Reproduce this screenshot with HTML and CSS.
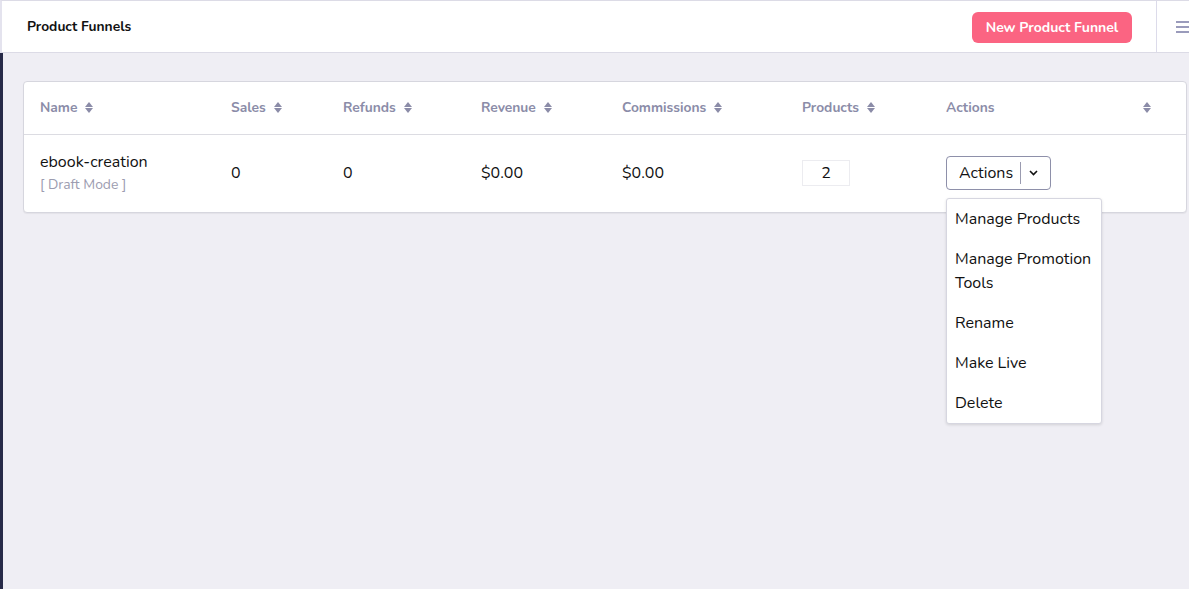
FILE: index.html
```html
<!DOCTYPE html>
<html>
<head>
<meta charset="utf-8" />
<title>Product Funnels</title>
<link rel="stylesheet" href="styles.css">
</head>
<body>
	<header class="topbar">
		<h1 class="page-title">Product Funnels</h1>
		<button class="btn-new">New Product Funnel</button>
		<span class="menu-toggle" aria-hidden="true">
			<svg width="14" height="12" viewBox="0 0 14 12"><rect x="0" y="0" width="14" height="2"/><rect x="0" y="5" width="14" height="2"/><rect x="0" y="10" width="14" height="2"/></svg>
		</span>
	</header>

	<main class="content">
		<div class="card">
			<div class="grid grid-head">
				<div class="th">Name <span class="sort"></span></div>
				<div class="th">Sales <span class="sort"></span></div>
				<div class="th">Refunds <span class="sort"></span></div>
				<div class="th">Revenue <span class="sort"></span></div>
				<div class="th">Commissions <span class="sort"></span></div>
				<div class="th">Products <span class="sort"></span></div>
				<div class="th th-actions">Actions <span class="sort"></span></div>
			</div>
			<div class="grid grid-row">
				<div class="td">
					<div class="funnel-name">ebook-creation</div>
					<div class="funnel-state">[ Draft Mode ]</div>
				</div>
				<div class="td">0</div>
				<div class="td">0</div>
				<div class="td">$0.00</div>
				<div class="td">$0.00</div>
				<div class="td"><span class="count">2</span></div>
				<div class="td">
					<div class="actions">
						<button class="btn-actions">
							<span class="btn-label">Actions</span>
							<span class="caret">
								<svg width="9" height="6" viewBox="0 0 9 6"><path d="M1 1l3.5 3.5L8 1" fill="none" stroke="#111" stroke-width="1.6"/></svg>
							</span>
						</button>
						<ul class="dropdown">
							<li>Manage Products</li>
							<li>Manage Promotion Tools</li>
							<li>Rename</li>
							<li>Make Live</li>
							<li>Delete</li>
						</ul>
					</div>
				</div>
			</div>
		</div>
	</main>
</body>
</html>
```

FILE: styles.css
```css
html, body {
	margin: 0;
	height: 100%;
}

body {
	font-family: "Nunito", "Lato", "Noto Sans", sans-serif;
	color: #111;
	background: #efeef4;
	display: flex;
	flex-direction: column;
}

/* Top bar */
.topbar {
	display: flex;
	align-items: center;
	height: 51px;
	background: #fff;
	border-top: 1px solid #dcdbe6;
	border-left: 2px solid #e4e3ee;
	border-bottom: 1px solid #dcdbe6;
	padding-left: 25px;
}
.page-title {
	margin: 0;
	font-size: 13.8px;
	font-weight: 700;
	flex: 1;
}
.btn-new {
	font-family: inherit;
	font-size: 14px;
	font-weight: 700;
	color: #fff;
	background: #fb6482;
	border: 0;
	border-radius: 6px;
	width: 160px;
	height: 31px;
	margin-top: 1px;
	margin-right: 24px;
}
.menu-toggle {
	align-self: stretch;
	border-left: 1px solid #dcdbea;
	width: 32px;
	display: flex;
	align-items: center;
	justify-content: flex-end;
	fill: #9a9bbb;
	overflow: hidden;
}
.menu-toggle svg {
	margin-right: -1px;
}

/* Main */
.content {
	flex: 1;
	border-left: 3px solid #272a48;
	padding: 28px 2px 0 20px;
}
.card {
	background: #fff;
	border: 1px solid #d6d6de;
	border-radius: 4px;
	box-shadow: 0 1px 1px rgba(0,0,0,.05);
}
.grid {
	display: grid;
	grid-template-columns: 191px 112px 138px 141px 180px 144px 1fr;
	padding: 0 16px;
	align-items: center;
}
.grid-head {
	height: 50px;
	padding-bottom: 2px;
	border-bottom: 1px solid #dcdce2;
}
.th {
	font-size: 13.8px;
	font-weight: 700;
	color: #8b8ca8;
	display: flex;
	align-items: center;
	gap: 8px;
}
.th-actions {
	justify-content: space-between;
	padding-right: 19px;
}
.sort {
	display: inline-block;
	width: 8px;
	height: 11px;
	position: relative;
}
.sort:before,
.sort:after {
	content: "";
	position: absolute;
	left: 0;
	border-left: 4px solid transparent;
	border-right: 4px solid transparent;
}
.sort:before {
	top: 0;
	border-bottom: 5px solid #8b8ca8;
}
.sort:after {
	bottom: 0;
	border-top: 5px solid #8b8ca8;
}

.grid-row {
	height: 75px;
	padding-bottom: 2px;
}
.td {
	font-size: 16px;
}
.funnel-name {
	line-height: 20px;
	margin-top: 1px;
}
.funnel-state {
	font-size: 13.9px;
	color: #9c9cb0;
	margin-top: 3px;
}
.count {
	display: inline-block;
	width: 46px;
	height: 24px;
	line-height: 24px;
	text-align: center;
	border: 1px solid #ececf0;
}

/* Actions dropdown */
.actions {
	position: relative;
	display: inline-block;
}
.btn-actions {
	font-family: inherit;
	font-size: 16px;
	color: #111;
	background: #fff;
	border: 1px solid #8e90aa;
	border-radius: 4px;
	height: 34px;
	padding: 0 12px 0 12px;
	display: flex;
	align-items: center;
}
.btn-label {
	padding-right: 7px;
	border-right: 1px solid #9a9bb0;
	line-height: 22px;
}
.caret {
	display: flex;
	padding-left: 8px;
}
.dropdown {
	position: absolute;
	top: 42px;
	left: 0;
	width: 154px;
	margin: 0;
	padding: 0;
	list-style: none;
	background: #fff;
	border: 1px solid #d6d6e0;
	border-radius: 3px;
	box-shadow: 0 1px 3px rgba(0,0,0,.12);
	z-index: 10;
}
.dropdown li {
	font-size: 16px;
	line-height: 24px;
	padding: 8px 8px;
}
```
